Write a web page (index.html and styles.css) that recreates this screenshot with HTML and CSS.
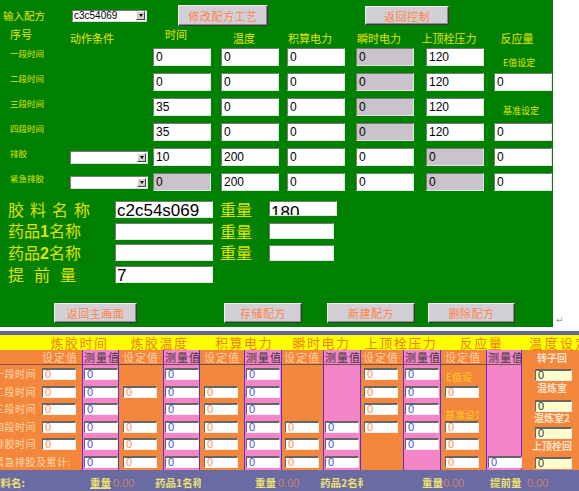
FILE: index.html
```html
<!DOCTYPE html>
<html lang="zh-CN">
<head>
<meta charset="utf-8">
<title>配方设定</title>
<link rel="stylesheet" href="styles.css">
</head>
<body>
<div class="top">
  <div class="panel">
    <div class="bar">
      <div class="lbl-in">输入配方</div>
      <div class="sel"><span class="txt">c3c54069</span><span class="arrow"></span></div>
      <div class="btn b-mod">修改配方工艺</div>
      <div class="btn b-ret">返回控制</div>
    </div>

    <div class="grid">
      <div class="hd first up">序号</div>
      <div class="hd">动作条件</div>
      <div class="hd hc up">时间</div>
      <div class="hd hc">温度</div>
      <div class="hd hc">积算电力</div>
      <div class="hd hc">瞬时电力</div>
      <div class="hd hc">上顶栓压力</div>
      <div class="hd hc">反应量</div>

      <div class="rl">一段时间</div><div></div>
      <div class="f">0</div><div class="f">0</div><div class="f">0</div><div class="f g">0</div><div class="f">120</div>
      <div class="rx">E值设定</div>

      <div class="rl">二段时间</div><div></div>
      <div class="f">0</div><div class="f">0</div><div class="f">0</div><div class="f g">0</div><div class="f">120</div>
      <div class="f">0</div>

      <div class="rl">三段时间</div><div></div>
      <div class="f">35</div><div class="f">0</div><div class="f">0</div><div class="f g">0</div><div class="f">120</div>
      <div class="rx rx2">基准设定</div>

      <div class="rl">四段时间</div><div></div>
      <div class="f">35</div><div class="f">0</div><div class="f">0</div><div class="f g">0</div><div class="f">120</div>
      <div class="f">0</div>

      <div class="rl">排胶</div>
      <div class="sel wide"><span class="txt"></span><span class="arrow"></span></div>
      <div class="f">10</div><div class="f">200</div><div class="f">0</div><div class="f">0</div><div class="f g">0</div>
      <div class="f">0</div>

      <div class="rl">紧急排胶</div>
      <div class="sel wide"><span class="txt"></span><span class="arrow"></span></div>
      <div class="f g">0</div><div class="f">200</div><div class="f">0</div><div class="f">0</div><div class="f g">0</div>
      <div class="f">0</div>
    </div>

    <div class="info">
      <div class="bl s1">胶料名称</div>
      <div class="big">c2c54s069</div>
      <div class="wt">重量</div>
      <div class="big w2 lowt">180</div>

      <div class="bl">药品<b>1</b>名称</div>
      <div class="big"></div>
      <div class="wt">重量</div>
      <div class="big w3"></div>

      <div class="bl">药品<b>2</b>名称</div>
      <div class="big"></div>
      <div class="wt">重量</div>
      <div class="big w3"></div>

      <div class="bl s2">提前量</div>
      <div class="big">7</div>
    </div>

    <div class="btns">
      <div class="btn b1">返回主画面</div>
      <div class="btn b2">存储配方</div>
      <div class="btn b3">新建配方</div>
      <div class="btn b4">删除配方</div>
    </div>
  </div>
  <span class="ret">↵</span>
</div>

<div class="tbl">
  <div class="hdr">
    <div class="h0"></div>
    <div class="h1">炼胶时间</div>
    <div class="h2">炼胶温度</div>
    <div class="h3">积算电力</div>
    <div class="h4">瞬时电力</div>
    <div class="h5">上顶栓压力</div>
    <div class="h6">反应量</div>
    <div class="h7">温度设定</div>
  </div>

  <div class="cols">
    <div class="col c0">
      <div class="sh"></div>
      <div class="sl lab">一段时间</div>
      <div class="sl lab">二段时间</div>
      <div class="sl lab">三段时间</div>
      <div class="sl lab">四段时间</div>
      <div class="sl lab">排胶时间</div>
      <div class="sl lab">紧急排胶及累计:</div>
    </div>
    <div class="col c1">
      <div class="sh"><span>设定值</span></div>
      <div class="sl"><div class="in">0</div></div>
      <div class="sl"><div class="in">0</div></div>
      <div class="sl"><div class="in">0</div></div>
      <div class="sl"><div class="in">0</div></div>
      <div class="sl"><div class="in">0</div></div>
      <div class="sl"></div>
    </div>
    <div class="col pk c2">
      <div class="sh"><span>测量值</span></div>
      <div class="sl"><div class="in">0</div></div>
      <div class="sl"><div class="in">0</div></div>
      <div class="sl"><div class="in">0</div></div>
      <div class="sl"><div class="in">0</div></div>
      <div class="sl"><div class="in">0</div></div>
      <div class="sl"><div class="in">0</div></div>
    </div>
    <div class="col c3">
      <div class="sh"><span>设定值</span></div>
      <div class="sl"></div>
      <div class="sl"><div class="in">0</div></div>
      <div class="sl"></div>
      <div class="sl"><div class="in">0</div></div>
      <div class="sl"><div class="in">0</div></div>
      <div class="sl"><div class="in">0</div></div>
    </div>
    <div class="col pk c4">
      <div class="sh"><span>测量值</span></div>
      <div class="sl"><div class="in">0</div></div>
      <div class="sl"><div class="in">0</div></div>
      <div class="sl"><div class="in">0</div></div>
      <div class="sl"><div class="in">0</div></div>
      <div class="sl"><div class="in">0</div></div>
      <div class="sl"><div class="in">0</div></div>
    </div>
    <div class="col c5">
      <div class="sh"><span>设定值</span></div>
      <div class="sl"></div>
      <div class="sl"><div class="in">0</div></div>
      <div class="sl"><div class="in">0</div></div>
      <div class="sl"><div class="in">0</div></div>
      <div class="sl"><div class="in">0</div></div>
      <div class="sl"><div class="in">0</div></div>
    </div>
    <div class="col pk c6">
      <div class="sh"><span>测量值</span></div>
      <div class="sl"><div class="in">0</div></div>
      <div class="sl"><div class="in">0</div></div>
      <div class="sl"><div class="in">0</div></div>
      <div class="sl"><div class="in">0</div></div>
      <div class="sl"><div class="in">0</div></div>
      <div class="sl"><div class="in">0</div></div>
    </div>
    <div class="col c7">
      <div class="sh"><span>设定值</span></div>
      <div class="sl"></div>
      <div class="sl"></div>
      <div class="sl"></div>
      <div class="sl"><div class="in">0</div></div>
      <div class="sl"><div class="in">0</div></div>
      <div class="sl"><div class="in">0</div></div>
    </div>
    <div class="col pk c8">
      <div class="sh"><span>测量值</span></div>
      <div class="sl"></div>
      <div class="sl"></div>
      <div class="sl"></div>
      <div class="sl"><div class="in">0</div></div>
      <div class="sl"><div class="in">0</div></div>
      <div class="sl"><div class="in">0</div></div>
    </div>
    <div class="col c9">
      <div class="sh"><span>设定值</span></div>
      <div class="sl"><div class="in">0</div></div>
      <div class="sl"><div class="in">0</div></div>
      <div class="sl"><div class="in">0</div></div>
      <div class="sl"><div class="in">0</div></div>
      <div class="sl"></div>
      <div class="sl"></div>
    </div>
    <div class="col pk c10">
      <div class="sh"><span>测量值</span></div>
      <div class="sl"><div class="in">0</div></div>
      <div class="sl"><div class="in">0</div></div>
      <div class="sl"><div class="in">0</div></div>
      <div class="sl"><div class="in">0</div></div>
      <div class="sl"><div class="in">0</div></div>
      <div class="sl"></div>
    </div>
    <div class="col c11">
      <div class="sh"><span>设定值</span></div>
      <div class="sl lo1"><div class="yl">E值设定</div></div>
      <div class="sl"><div class="in">0</div></div>
      <div class="sl lo2"><div class="yl wide">基准设定</div></div>
      <div class="sl"><div class="in">0</div></div>
      <div class="sl"><div class="in">0</div></div>
      <div class="sl"><div class="in">0</div></div>
    </div>
    <div class="col pk c12">
      <div class="sh"><span>测量值</span></div>
      <div class="sl"></div>
      <div class="sl"></div>
      <div class="sl"></div>
      <div class="sl"></div>
      <div class="sl"></div>
      <div class="sl"><div class="in">0</div></div>
    </div>
    <div class="col c13">
      <div class="tl t1">转子回</div>
      <div class="yin m1">0</div>
      <div class="tl t2">混炼室</div>
      <div class="yin m2">0</div>
      <div class="tl">混炼室2</div>
      <div class="yin m3">0</div>
      <div class="tl t2">上顶栓回</div>
      <div class="yin m4">0</div>
    </div>
  </div>

  <div class="foot">
    <div class="fy first">胶料名:</div>
    <div class="fy ul">重量</div>
    <div class="fv">0.00</div>
    <div><div class="fy clip c1w">药品1名称</div></div>
    <div class="fy">重量</div>
    <div class="fv">0.00</div>
    <div><div class="fy clip c2w">药品2名称</div></div>
    <div class="fy">重量</div>
    <div class="fv">0.00</div>
    <div class="fy">提前量</div>
    <div class="fv">0.00</div>
  </div>
</div>
</body>
</html>
```

FILE: styles.css
```css
html, body {
  margin: 0;
  padding: 0;
}
body {
  width: 579px;
  height: 491px;
  overflow: hidden;
  background: #ffffff;
  font-family: "Noto Sans CJK SC", "Liberation Sans", sans-serif;
}

/* ---------- top green panel ---------- */
.top {
  display: flex;
  align-items: flex-end;
  height: 327px;
}
.panel {
  width: 553px;
  height: 327px;
  background: #008000;
  display: flex;
  flex-direction: column;
}
.ret {
  font-family: "DejaVu Sans", sans-serif;
  color: #9a9a9a;
  font-size: 9px;
  line-height: 9px;
  margin-left: 3px;
  margin-bottom: 2px;
}

.bar {
  display: flex;
  align-items: center;
  height: 21px;
  margin-top: 5px;
  padding-left: 3px;
}
.lbl-in {
  width: 69px;
  color: #e6e600;
  font-size: 10.5px;
  line-height: 12px;
  white-space: nowrap;
}
.sel {
  width: 75px;
  height: 12px;
  box-sizing: border-box;
  background: #ffffff;
  border: 1px solid;
  border-color: #7a7a7a #dcdcdc #dcdcdc #7a7a7a;
  display: flex;
  align-items: center;
  justify-content: space-between;
  font-family: "Liberation Sans", sans-serif;
  font-size: 10px;
  color: #000;
}
.sel .txt {
  padding-left: 1px;
  line-height: 10px;
}
.sel.wide {
  width: 78px;
  height: 13px;
  align-self: center;
}
.arrow {
  width: 9px;
  height: 9px;
  box-sizing: border-box;
  background: #d4d0c8;
  border: 1px solid;
  border-color: #ffffff #404040 #404040 #ffffff;
  display: flex;
  align-items: center;
  justify-content: center;
  margin-right: 1px;
}
.arrow::after {
  content: "";
  border-left: 2.5px solid transparent;
  border-right: 2.5px solid transparent;
  border-top: 3px solid #000;
}

.btn {
  height: 21px;
  box-sizing: border-box;
  background: #d3cfd6;
  border: 1px solid;
  border-color: #f2f2f2 #383838 #383838 #f2f2f2;
  box-shadow: inset -1px -1px 0 #8a8a8a;
  color: #ff8448;
  font-size: 11px;
  letter-spacing: 0.5px;
  display: flex;
  align-items: center;
  justify-content: center;
  white-space: nowrap;
}
.b-mod {
  width: 90px;
  margin-left: 31px;
}
.b-ret {
  width: 84px;
  height: 19px;
  margin-left: 97px;
}

/* main recipe grid */
.grid {
  display: grid;
  grid-template-columns: 70px 83px 68px 66px 69px 70px 68px 59px;
  grid-template-rows: 15px repeat(6, 18px);
  row-gap: 7px;
}
.hd {
  color: #e6e600;
  font-size: 11px;
  line-height: 12px;
  align-self: end;
  margin-bottom: -3px;
  white-space: nowrap;
}
.hd.first {
  padding-left: 10px;
}
.hd.up {
  margin-bottom: 1px;
}
.hc {
  display: flex;
  justify-content: center;
  width: 46px;
}
.rl {
  color: #e6e600;
  font-size: 8.5px;
  line-height: 10px;
  padding-left: 10px;
  align-self: start;
  white-space: nowrap;
}
.rx {
  color: #e6e600;
  font-size: 9px;
  line-height: 12px;
  align-self: end;
  margin-bottom: -3px;
  padding-left: 9px;
  white-space: nowrap;
}
.rx2 {
  margin-bottom: -1px;
}
.f {
  width: 58px;
  height: 18px;
  box-sizing: border-box;
  background: #ffffff;
  border: 1px solid;
  border-color: #777777 #e4e4e4 #e4e4e4 #777777;
  font-family: "Liberation Sans", sans-serif;
  font-size: 12px;
  line-height: 16px;
  padding-left: 2px;
  color: #000;
}
.f.g {
  background: #cbc3cb;
}

/* names / weights */
.info {
  display: grid;
  grid-template-columns: 107px 98px 56px 68px;
  grid-template-rows: repeat(4, 17px);
  row-gap: 4.7px;
  margin-top: 10px;
  padding-left: 8px;
  align-items: center;
}
.bl {
  color: #e0e000;
  font-size: 16px;
  line-height: 17px;
  white-space: nowrap;
}
.bl b {
  font-family: "Liberation Sans", sans-serif;
  font-weight: bold;
}
.s1 {
  letter-spacing: 6px;
}
.s2 {
  letter-spacing: 10px;
}
.wt {
  color: #e0e000;
  font-size: 16px;
  line-height: 17px;
  padding-left: 7px;
}
.big {
  height: 17px;
  box-sizing: border-box;
  background: #ffffff;
  border: 1px solid;
  border-color: #777777 #e4e4e4 #e4e4e4 #777777;
  font-family: "Liberation Sans", sans-serif;
  font-size: 17px;
  line-height: 17px;
  padding-left: 1px;
  color: #000;
  overflow: hidden;
  white-space: nowrap;
}
.big.w2 {
  width: 68px;
  height: 15px;
  align-self: start;
}
.big.w3 {
  width: 65px;
  height: 16px;
}
.lowt {
  padding-top: 2px;
}

.btns {
  display: flex;
  margin-top: auto;
  margin-bottom: 4px;
  padding-left: 54px;
}
.btns .btn {
  height: 20px;
}
.b1 { width: 83px; }
.b2 { width: 78px; margin-left: 87px; }
.b3 { width: 88px; margin-left: 25px; }
.b4 { width: 87px; margin-left: 13px; }

/* ---------- bottom table ---------- */
.tbl {
  margin-top: 4px;
  border-top: 4px solid #66669c;
  width: 579px;
  overflow: hidden;
}
.hdr {
  display: flex;
  height: 15px;
  background: #ffff00;
}
.hdr div {
  text-align: center;
  color: #f08000;
  font-size: 13px;
  line-height: 15px;
  letter-spacing: 1.5px;
  white-space: nowrap;
  overflow: hidden;
}
.h0 { width: 40px; }
.h1 { width: 79px; }
.h2 { width: 81px; }
.h3 { width: 82px; padding-left: 6px; box-sizing: border-box; }
.h4 { width: 79px; }
.h5 { width: 80px; }
.h6 { width: 81px; }
.hdr .h7 {
  width: 57px;
  text-align: left;
  padding-left: 7px;
  letter-spacing: 2.5px;
  box-sizing: border-box;
}

.cols {
  display: flex;
  height: 120px;
}
.col {
  background: #f4873c;
  display: flex;
  flex-direction: column;
  box-sizing: border-box;
}
.col.pk {
  background: #f385c8;
  border-left: 1px solid #5a2ed6;
  border-right: 1px solid #5a2ed6;
}
.c0 {
  width: 40px;
  position: relative;
  z-index: 1;
}
.c1 { width: 42px; }
.c2 { width: 37px; }
.c3 { width: 44px; }
.c4 { width: 37px; }
.c5 { width: 44px; }
.c6 { width: 38px; }
.c7 { width: 41px; }
.c8 { width: 38px; }
.c9 { width: 42px; }
.c10 { width: 38px; }
.c11 { width: 45px; }
.c12 { width: 36px; }
.c13 { width: 57px; }

.sh {
  height: 15px;
  flex: none;
  box-sizing: border-box;
  border-bottom: 1px solid #7c5044;
  font-size: 11px;
  line-height: 14px;
  color: #ffd2a8;
}
.sh span {
  display: block;
  width: 35px;
  margin-left: 2px;
  overflow: hidden;
  white-space: nowrap;
  letter-spacing: 1px;
}
.pk .sh {
  color: #3a3a3a;
}
.pk .sh span {
  margin-left: 1px;
}
.c3 .sh span,
.c5 .sh span,
.c11 .sh span {
  margin-left: 4px;
}

.sl {
  height: 17.5px;
  flex: none;
  box-sizing: border-box;
  padding-top: 3px;
}
.sl.lab {
  padding-top: 0;
  margin-left: -6px;
  font-size: 10px;
  line-height: 17.5px;
  letter-spacing: 0.5px;
  color: #ffd8b0;
  white-space: nowrap;
}
.in {
  width: 34px;
  height: 12px;
  box-sizing: border-box;
  background: #ffffff;
  border-top: 2px solid #666666;
  border-left: 1px solid #666666;
  border-right: 1px solid #eeeeee;
  border-bottom: 1px solid #eeeeee;
  margin-left: 2px;
  padding-left: 2px;
  font-family: "Liberation Sans", sans-serif;
  font-size: 11px;
  line-height: 9px;
  color: #ff8c50;
  overflow: hidden;
}
.c3 .in, .c5 .in, .c11 .in {
  margin-left: 4px;
}
.c7 .in, .c9 .in {
  margin-left: 3px;
}
.pk .in {
  margin-left: 1px;
  color: #4b4bf0;
}
.sl.lo1 { padding-top: 6px; }
.sl.lo2 { padding-top: 9px; }
.yl {
  color: #ffcc22;
  font-size: 10px;
  line-height: 12px;
  margin-left: 5px;
  width: 27px;
  overflow: hidden;
  white-space: nowrap;
}
.yl.wide {
  width: 34px;
  margin-left: 4px;
}

.tl {
  color: #ffe4cc;
  font-weight: bold;
  font-size: 10px;
  line-height: 12px;
  height: 12px;
  text-align: center;
  white-space: nowrap;
  padding-left: 3px;
}
.tl.t1 {
  height: 14px;
  line-height: 14px;
  margin-top: 1px;
}
.tl.t2 {
  margin-top: 1px;
}
.yin {
  width: 37px;
  height: 12px;
  flex: none;
  box-sizing: border-box;
  margin-left: 13px;
  background: #ffffcc;
  border-top: 2px solid #666666;
  border-left: 1px solid #666666;
  border-right: 1px solid #eeeeee;
  border-bottom: 1px solid #eeeeee;
  padding-left: 2px;
  font-family: "Liberation Sans", sans-serif;
  font-size: 11px;
  line-height: 9px;
  color: #333333;
}
.m1 { margin-top: 4px; }
.m2 { margin-top: 6px; }
.m3 { margin-top: 3px; }
.m4 { margin-top: 5px; }

.foot {
  display: grid;
  grid-template-columns: 90px 23px 42px 100px 23px 42px 102px 21px 47px 37px 52px;
  height: 21px;
  box-sizing: border-box;
  padding-top: 4px;
  background: #6b6ba3;
  align-items: center;
  font-size: 10.5px;
  line-height: 14px;
  white-space: nowrap;
}
.fy {
  color: #ece070;
  font-weight: bold;
}
.fy.first {
  margin-left: -10px;
}
.fy.ul {
  text-decoration: underline;
}
.fv {
  color: #c98070;
  font-family: "Liberation Sans", sans-serif;
  font-size: 11px;
}
.clip {
  overflow: hidden;
}
.c1w { width: 46px; }
.c2w { width: 43px; }
```
